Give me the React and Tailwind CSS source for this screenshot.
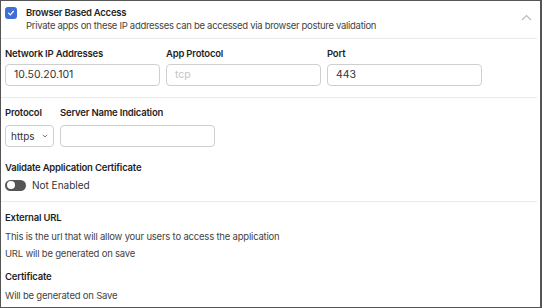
export default function App() {
  const lbl = "text-[9.5px] tracking-[-0.2px] leading-[14px] font-semibold text-[#1f1f1f]";
  const desc = "text-[9.5px] tracking-[-0.2px] leading-[14px] text-[#444]";
  return (
    <div className="w-[542px] h-[308px] bg-white border-l border-t border-b border-r-2 border-[#555] overflow-hidden text-[#222]" style={{ fontFamily: 'Inter, "Noto Sans", sans-serif' }}>
      <div className="flex items-start justify-between h-[38px] border-b border-[#ebebeb] pl-[4px] pr-[5px] mr-[3px]">
        <div className="flex items-start pt-[6px]">
          <div className="w-[12px] h-[12px] rounded-[3px] bg-[#3e6fd9] flex items-center justify-center">
            <svg width="8" height="8" viewBox="0 0 10 10" fill="none">
              <path d="M2 5.2 L4.2 7.3 L8 2.8" stroke="white" strokeWidth="1.6" strokeLinecap="round" strokeLinejoin="round" />
            </svg>
          </div>
          <div className="ml-[9px] -mt-[1px]">
            <div className="text-[9.5px] tracking-[-0.25px] leading-[13px] font-semibold text-[#1f1f1f]">Browser Based Access</div>
            <div className="text-[9.5px] tracking-[-0.3px] leading-[13px] text-[#444]">Private apps on these IP addresses can be accessed via browser posture validation</div>
          </div>
        </div>
        <svg className="mt-[13px]" width="11" height="7" viewBox="0 0 11 7" fill="none">
          <path d="M1 6 L5.5 1.5 L10 6" stroke="#bbb" strokeWidth="1.2" />
        </svg>
      </div>

      <div className="px-[4px] mr-[3px] pt-[8px] pb-[11px] border-b border-[#ebebeb]">
        <div className="flex gap-[6px]">
          {[
            ["Network IP Addresses", "10.50.20.101", false],
            ["App Protocol", "tcp", true],
            ["Port", "443", false],
          ].map(([label, value, ph]) => (
            <div key={label} className="w-[155px]">
              <div className={lbl}>{label}</div>
              <div className={`mt-[3px] h-[22px] rounded-[4px] border border-[#cfcfcf] flex items-center pl-[8px] text-[10.5px] ${ph ? "text-[#c4c4c4]" : "text-[#333]"}`}>
                {value}
              </div>
            </div>
          ))}
        </div>
      </div>

      <div className="px-[4px] mr-[3px] pt-[8px] pb-[9px] border-b border-[#ebebeb]">
        <div className="flex gap-[6px]">
          <div className="w-[49px]">
            <div className={lbl}>Protocol</div>
            <div className="mt-[5px] h-[22px] rounded-[4px] border border-[#cfcfcf] flex items-center pl-[5px] text-[10px] text-[#333]">
              https
              <svg className="ml-[7px]" width="6" height="4" viewBox="0 0 6 4" fill="none">
                <path d="M0.8 0.8 L3 3 L5.2 0.8" stroke="#666" strokeWidth="0.9" />
              </svg>
            </div>
          </div>
          <div className="w-[155px]">
            <div className={lbl}>Server Name Indication</div>
            <div className="mt-[5px] h-[22px] rounded-[4px] border border-[#cfcfcf]"></div>
          </div>
        </div>
        <div className={`mt-[14px] ${lbl}`}>Validate Application Certificate</div>
        <div className="mt-[3px] flex items-center h-[14px]">
          <div className="w-[21px] h-[11px] rounded-full bg-[#555] flex items-center pl-[1.5px]">
            <div className="w-[8px] h-[8px] rounded-full bg-white"></div>
          </div>
          <span className="ml-[6px] text-[10px] text-[#333]">Not Enabled</span>
        </div>
      </div>

      <div className="px-[4px] pt-[9px]">
        <div className={lbl}>External URL</div>
        <div className={`mt-[5px] ${desc}`}>This is the url that will allow your users to access the application</div>
        <div className={`mt-[3px] ${desc}`}>URL will be generated on save</div>
        <div className={`mt-[9px] ${lbl}`}>Certificate</div>
        <div className={`mt-[5px] ${desc}`}>Will be generated on Save</div>
      </div>
    </div>
  );
}
